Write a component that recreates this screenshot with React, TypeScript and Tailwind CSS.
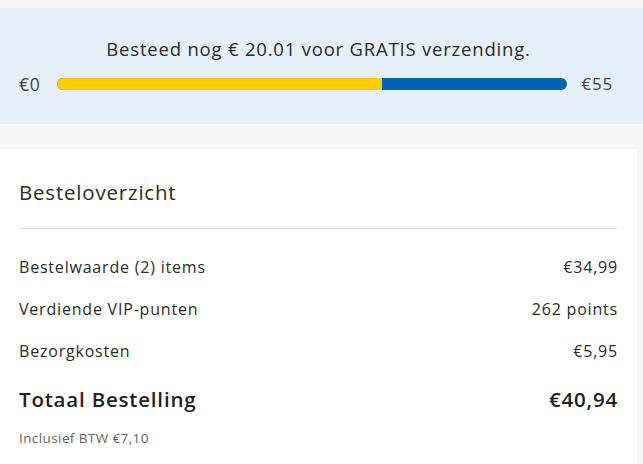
import React from 'react';

const rows = [
  { label: 'Bestelwaarde (2) items', value: '€34,99' },
  { label: 'Verdiende VIP-punten', value: '262 points' },
  { label: 'Bezorgkosten', value: '€5,95' },
];

export default function App() {
  const spent = 34.99;
  const goal = 55;
  const pct = (spent / goal) * 100;

  return (
    <div className="w-[643px] h-[464px] overflow-hidden bg-[#f7f7f7] pt-2 text-[#222] tracking-[0.05em] font-['Open_Sans',sans-serif]">
      {/* Free shipping banner */}
      <div className="bg-[#e5f0fb] h-[116px] pt-[29px] pl-[19px] pr-[30px]">
        <p className="text-center text-[18.5px] leading-6 text-[#2b2b2b] ml-[5px]">
          Besteed nog € 20.01 voor GRATIS verzending.
        </p>
        <div className="mt-[13px] flex items-center">
          <span className="text-[17.5px] leading-5 text-[#444]">€0</span>
          <div className="flex-1 ml-[16px] mr-[14px] h-[12px] rounded-full bg-[#0066b2] overflow-hidden">
            <div className="h-full bg-[#ffcc00]" style={{ width: `${pct}%` }} />
          </div>
          <span className="text-[17px] leading-5 text-[#444]">€55</span>
        </div>
      </div>

      {/* Order summary */}
      <div className="mt-[25px] mr-[6px] bg-white h-[320px] px-[19px] pt-[29px]">
        <h2 className="text-[20.5px] leading-7 text-[#2b2b2b]">Besteloverzicht</h2>
        <div className="mt-[22px] border-t border-[#dcdcdc] mr-[1px]" />
        <div className="mt-[26px] flex flex-col gap-[18px]">
          {rows.map((r) => (
            <div key={r.label} className="flex justify-between text-[16px] leading-6 text-[#2b2b2b]">
              <span>{r.label}</span>
              <span>{r.value}</span>
            </div>
          ))}
        </div>
        <div className="mt-[22px] flex justify-between text-[20.5px] leading-7 font-semibold text-[#222]">
          <span>Totaal Bestelling</span>
          <span>€40,94</span>
        </div>
        <p className="mt-[17px] text-[13.5px] leading-4 tracking-[0.03em] text-[#666]">Inclusief BTW €7,10</p>
      </div>
    </div>
  );
}
